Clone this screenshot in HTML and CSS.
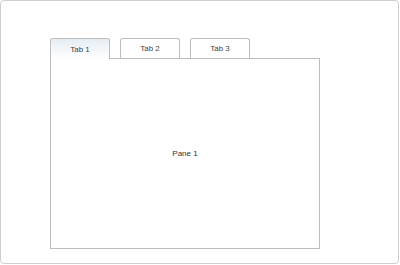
FILE: index.html
```html
<!DOCTYPE html>
<html lang="en">
<head>
    <meta charset="UTF-8">
    <title>Tabs</title>
    <link rel="stylesheet" href="styles.css">
</head>
<body>
    <div class="frame">
        <div class="tabs">
            <div class="tab-bar">
                <div class="tab active">Tab 1</div>
                <div class="tab">Tab 2</div>
                <div class="tab">Tab 3</div>
            </div>
            <div class="pane">Pane 1</div>
        </div>
    </div>
</body>
</html>
```

FILE: styles.css
```css
* {
    margin: 0;
    padding: 0;
    box-sizing: border-box;
    font-family: 'Liberation Sans', Arial, sans-serif;
}

body {
    background: #fff;
    width: 400px;
    height: 265px;
}

.frame {
    width: 399px;
    height: 264px;
    border: 1px solid #cfcfcf;
    border-radius: 4px;
    padding: 37px 0 0 49px;
}

.tabs {
    width: 270px;
}

.tab-bar {
    display: flex;
    gap: 10px;
    position: relative;
    z-index: 1;
}

.tab {
    width: 60px;
    height: 20px;
    border: 1px solid #bdbdbd;
    border-bottom: none;
    border-radius: 3px 3px 0 0;
    background: #fff;
    color: #444;
    font-size: 8px;
    display: flex;
    align-items: center;
    justify-content: center;
}

.tab.active {
    height: 21px;
    margin-bottom: -1px;
    background: linear-gradient(#e6edf3, #fff);
}

.pane {
    height: 191px;
    border: 1px solid #bdbdbd;
    display: flex;
    align-items: center;
    justify-content: center;
    color: #333;
    font-size: 8px;
}
```
